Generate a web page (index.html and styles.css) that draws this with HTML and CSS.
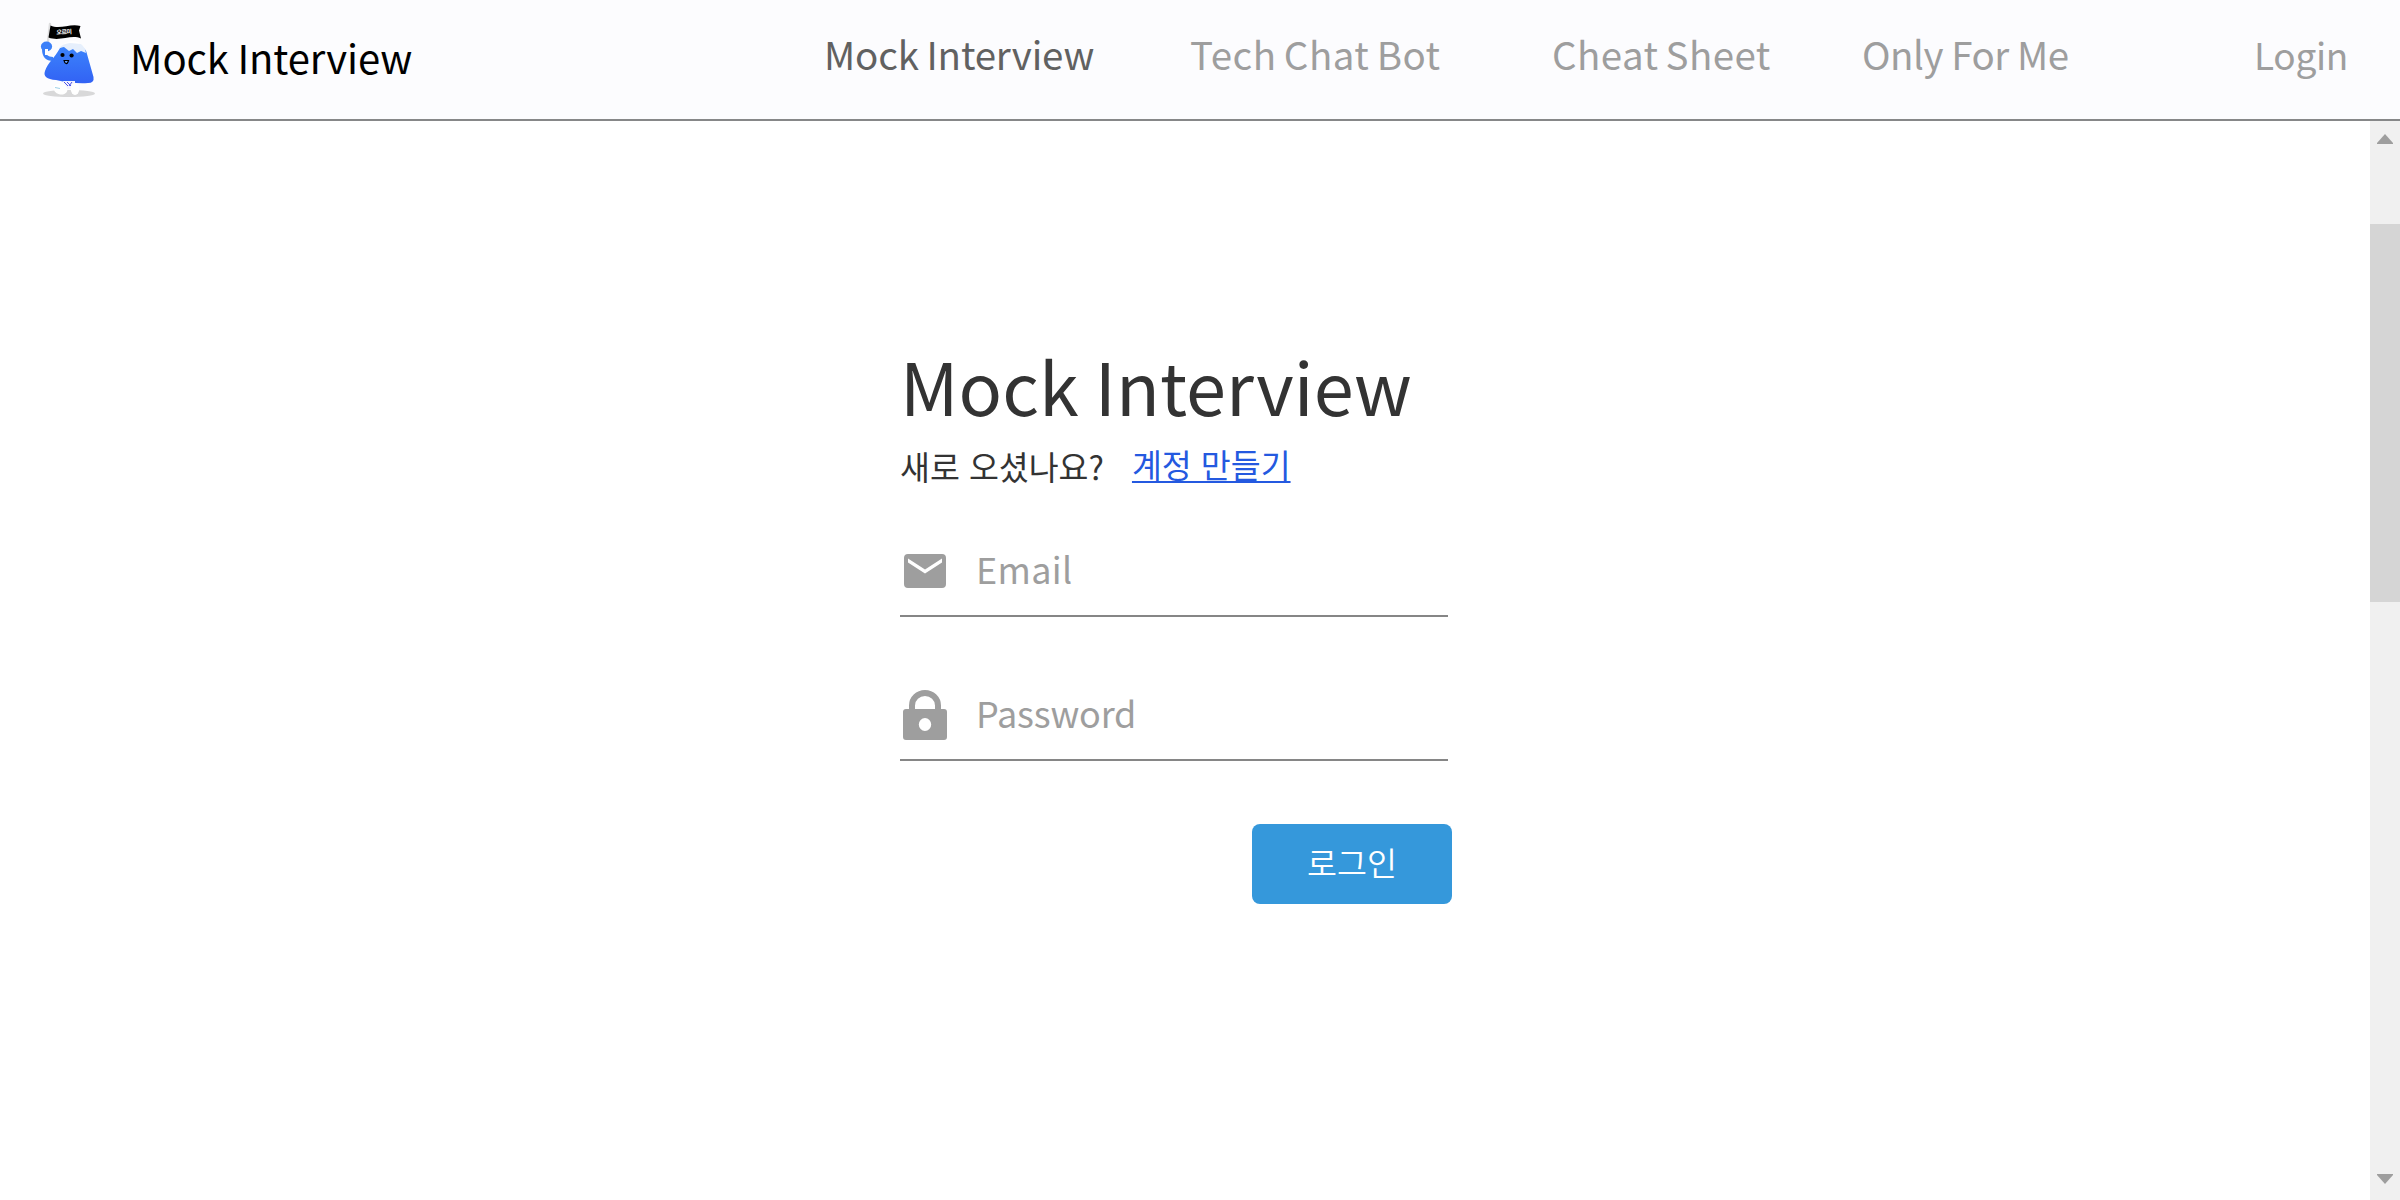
FILE: index.html
```html
<!DOCTYPE html>
<html lang="ko">
<head>
<meta charset="utf-8">
<title>Mock Interview</title>
<link rel="stylesheet" href="styles.css">
</head>
<body>
<header class="header">
  <a class="brand">
    <svg class="logo" viewBox="0 0 60 78" width="60" height="78">
      <defs>
        <linearGradient id="body" x1="0" y1="0" x2="0" y2="1"><stop offset="0" stop-color="#3c84fc"/><stop offset="1" stop-color="#3262f4"/></linearGradient>
      </defs>
      <ellipse cx="29" cy="71.5" rx="26" ry="3.6" fill="#d8d8d9"/>
      <path d="M10 2 7 28" stroke="#dededf" stroke-width="2.4" stroke-linecap="round"/>
      <path d="M10.500 3.500C20 8 30 1 40.500 4L39 8.500 41 16.500C31 12 20 20 8.500 15.500Z" fill="#000"/>
      <text class="flag" x="16.5" y="12.200" textLength="15.500" transform="rotate(-3 24 10)">오르미</text>
      <ellipse cx="6.500" cy="24.500" rx="5.600" ry="5" fill="#3c80f8"/>
      <path d="M4 27C4 35 7 37 13 37" stroke="#3c80f8" stroke-width="4" fill="none"/>
      <path d="M6.500 27V33" stroke="#fff" stroke-width="3"/>
      <path d="M20 25C27 17 38 17 44 25L49 38 13 35Z" fill="#fff"/>
      <path d="M20 26Q25 22 29 27L33 24 38 27 43 26Q46 27 47 32L53.500 55Q54.500 61 48 61Q34 62 16 58Q2 57 5 49C8 40 14 37 20 26Z" fill="url(#body)"/>
      <path d="M19 26Q22 22 30 21L41 22Q45 25 46 31L41 29 37 31 33 27 29 29 24 25Z" fill="#e6effc"/>
      <circle cx="22.500" cy="33" r="2.100"/><circle cx="31.600" cy="33.500" r="2.100"/>
      <path d="M24 38.500 28.500 38.500Q27.500 42 26 41.500Q24.500 41 24 38.500Z" fill="#68a0ff" stroke="#000" stroke-width="1.200"/>
      <path d="M23 59H35V67H27Z" fill="#f3f2ff"/>
      <path d="M24 60 28 64M27 60 31 64M32 60 29 64" stroke="#4b54e8" stroke-width="1"/>
      <ellipse cx="20.500" cy="67" rx="7" ry="5.300" fill="#fff" transform="rotate(15 20 67)"/>
      <ellipse cx="35" cy="67" rx="4.300" ry="6" fill="#fff"/>
      <path d="M15 65.500 20 66.500" stroke="#9ed0e8" stroke-width="1"/>
    </svg>
    <span class="brand-name">Mock Interview</span>
  </a>
  <nav class="nav">
    <a class="nav-link active">Mock Interview</a>
    <a class="nav-link chat">Tech Chat Bot</a>
    <a class="nav-link sheet">Cheat Sheet</a>
    <a class="nav-link me">Only For Me</a>
    <a class="nav-link login">Login</a>
  </nav>
</header>
<div class="content">
  <main class="page">
    <form class="form">
      <h1 class="title">Mock Interview</h1>
      <p class="intro"><span>새로 오셨나요?</span><a class="signup">계정 만들기</a></p>
      <label class="field">
        <svg class="icon" viewBox="0 0 50 50" width="50" height="50"><path fill="#9e9e9e" fill-rule="evenodd" d="M8 8H42Q46 8 46 12V38Q46 42 42 42H8Q4 42 4 38V12Q4 8 8 8ZM8 12.500V16.500L25 27.500 42 16.500V12.500L25 23.500Z"/></svg>
        <span class="placeholder email">Email</span>
      </label>
      <label class="field">
        <svg class="icon" viewBox="0 0 50 50" width="50" height="50"><path fill="#9e9e9e" fill-rule="evenodd" d="M9 19V15.500A16 15.500 0 0 1 41 15.500V19H44Q47 19 47 22V47Q47 50 44 50H6Q3 50 3 47V22Q3 19 6 19ZM15 19H35V15.500A10 9.500 0 0 0 15 15.500ZM25 28A6.200 6.500 0 1 0 25 41A6.200 6.500 0 1 0 25 28Z"/></svg>
        <span class="placeholder password">Password</span>
      </label>
      <button class="submit" type="button">로그인</button>
    </form>
  </main>
  <div class="scrollbar">
    <svg class="arrow" viewBox="0 0 16 10" width="16" height="10"><path d="M0 10V9L8 0 16 9V10Z" fill="#9e9e9e"/></svg>
    <div class="thumb"></div>
    <svg class="arrow down" viewBox="0 0 16 10" width="16" height="10"><path d="M0 0V1L8 10 16 1V0Z" fill="#9e9e9e"/></svg>
  </div>
</div>
</body>
</html>
```
FILE: styles.css
```css
* { box-sizing: border-box; }
body {
  margin: 0;
  height: 1200px;
  display: flex;
  flex-direction: column;
  overflow: hidden;
  background: #fff;
  font-family: "Noto Sans CJK KR", sans-serif;
  text-rendering: optimizeLegibility;
}
.header {
  height: 121px;
  flex: none;
  display: flex;
  border-bottom: 2px solid #868788;
  background: #fcfcfe;
}
.brand { display: flex; width: 824px; padding-left: 40px; }
.logo { margin-top: 22px; flex: none; }
.flag { font-size: 6px; font-weight: 700; fill: #fff; }
.brand-name { margin-left: 30px; font-size: 40px; line-height: 114px; letter-spacing: -0.1px; word-spacing: -2.5px; color: #000; white-space: nowrap; }
.nav { display: flex; }
.nav-link { font-size: 38.5px; line-height: 107px; color: #9e9e9e; white-space: nowrap; }
.active { width: 366px; color: #616161; letter-spacing: -0.16px; word-spacing: -3px; }
.chat { width: 362px; letter-spacing: 0.5px; word-spacing: -4px; }
.sheet { width: 310px; letter-spacing: 0.42px; word-spacing: -4px; }
.me { width: 392px; letter-spacing: -0.5px; word-spacing: -2px; }
.login { font-size: 37px; line-height: 108px; letter-spacing: -0.3px; }
.content { flex: 1; display: flex; min-height: 0; }
.page { flex: 1; padding: 213px 0 0 900px; }
.form { width: 552px; display: flex; flex-direction: column; }
.title { margin: 0; font-size: 72px; font-weight: 400; line-height: 101px; letter-spacing: 0.1px; word-spacing: -4.5px; color: #333; white-space: nowrap; }
.intro { margin: 0; height: 57px; display: flex; gap: 28px; font-size: 32.5px; line-height: 61px; color: #333; white-space: nowrap; }
.signup {
  line-height: 57px;
  color: #2459e0;
  text-decoration: underline;
  text-decoration-thickness: 2px;
  text-decoration-skip-ink: none;
  text-underline-offset: 3px;
}
.field { width: 548px; height: 81px; margin-top: 44px; display: flex; border-bottom: 2px solid #868686; }
.field + .field { margin-top: 63px; }
.icon { flex: none; margin-top: 10px; }
.placeholder { margin-left: 26px; font-size: 36px; line-height: 65px; color: #9e9e9e; }
.email { letter-spacing: 0.3px; }
.password { letter-spacing: -0.15px; }
.submit {
  align-self: flex-end;
  width: 200px;
  height: 80px;
  margin-top: 63px;
  padding: 0 0 4px;
  border: 0;
  border-radius: 8px;
  background: #3598db;
  color: #fff;
  font: 350 32.6px/76px "Noto Sans CJK KR", sans-serif;
}
.scrollbar { width: 30px; display: flex; flex-direction: column; align-items: center; background: #f0f0f0; }
.arrow { flex: none; margin-top: 13px; }
.thumb { width: 30px; height: 378px; margin-top: 80px; background: #d5d5d5; }
.down { margin-top: auto; margin-bottom: 16px; }
```
